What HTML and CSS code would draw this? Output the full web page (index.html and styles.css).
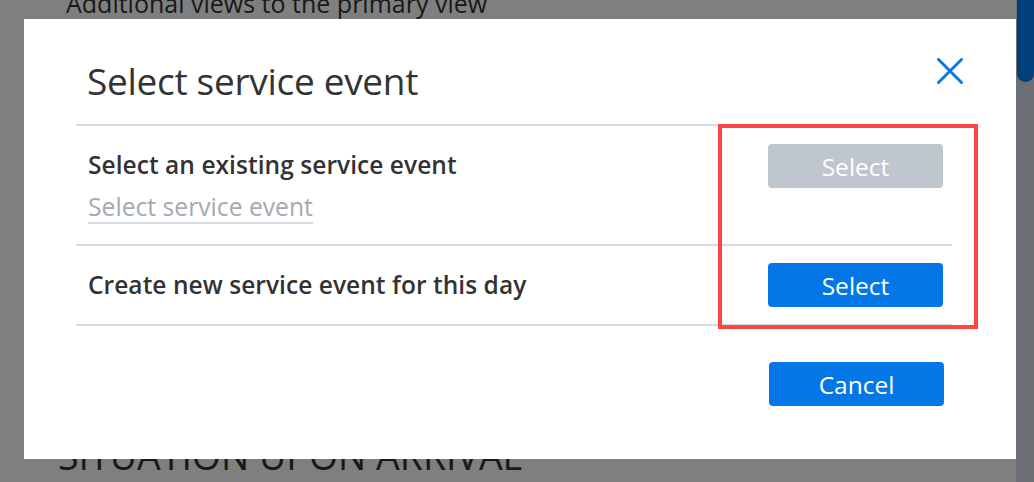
FILE: index.html
```html
<!DOCTYPE html>
<html lang="en">
<head>
<meta charset="utf-8">
<title>Select service event</title>
<link rel="stylesheet" href="styles.css">
</head>
<body>
<div class="page">
  <p class="page-sub">Additional views to the primary view</p>
  <h2 class="page-section">SITUATION UPON ARRIVAL</h2>
</div>
<div class="overlay"></div>
<div class="scrollbar"><div class="thumb"></div></div>
<div class="modal">
  <div class="modal-inner">
    <div class="modal-header">
      <h1 class="modal-title">Select service event</h1>
    </div>
    <div class="row row-existing">
      <div class="row-text">
        <div class="row-label">Select an existing service event</div>
        <div class="picker">Select service event</div>
      </div>
      <button class="btn btn-disabled">Select</button>
    </div>
    <div class="row row-new">
      <div class="row-text">
        <div class="row-label">Create new service event for this day</div>
      </div>
      <button class="btn btn-primary">Select</button>
    </div>
    <div class="modal-footer">
      <button class="btn btn-primary">Cancel</button>
    </div>
  </div>
  <button class="close" aria-label="Close">
    <svg width="26" height="26" viewBox="0 0 26 26"><path d="M1.5 1.5 L24.5 24.5 M24.5 1.5 L1.5 24.5" stroke="#0a77e8" stroke-width="3" stroke-linecap="round" fill="none"/></svg>
  </button>
  <div class="highlight"></div>
</div>
</body>
</html>
```
FILE: styles.css
```css
* { box-sizing: border-box; }
html, body { margin: 0; padding: 0; }
body {
  width: 1034px;
  height: 482px;
  overflow: hidden;
  background: #ffffff;
  font-family: "Open Sans", "Noto Sans", sans-serif;
  color: #333333;
}
.page {
  padding: 0 0 0 58px;
}
.page-sub {
  margin: -13px 0 0 8px;
  font-size: 25px;
  line-height: 32px;
  color: #333;
}
.page-section {
  margin: 417px 0 0 0;
  font-size: 37.5px;
  font-weight: 400;
  line-height: 40px;
  color: #333;
}
.overlay {
  position: fixed;
  inset: 0;
  background: rgba(0, 0, 0, 0.5);
}
.scrollbar {
  position: fixed;
  top: 0;
  right: 0;
  width: 18px;
  height: 482px;
  background: #6c6f73;
}
.thumb {
  margin-left: 1px;
  width: 17px;
  height: 82px;
  background: #003e7c;
  border-radius: 0 0 9px 9px;
}
.modal {
  position: fixed;
  left: 24px;
  top: 19px;
  width: 992px;
  height: 440px;
  background: #ffffff;
  padding: 0 64px 0 52px;
}
.modal-inner {
  display: flex;
  flex-direction: column;
}
.modal-header {
  height: 107px;
  border-bottom: 2px solid #d7dbe0;
  padding: 36px 0 0 11px;
}
.modal-title {
  margin: 0;
  font-size: 37px;
  font-weight: 400;
  line-height: 52px;
  color: #333;
  letter-spacing: -0.3px;
}
.row {
  display: flex;
  justify-content: space-between;
  border-bottom: 2px solid #d7dbe0;
  padding: 0 9px 0 12px;
}
.row-existing {
  height: 120px;
  padding-top: 18px;
  align-items: flex-start;
}
.row-new {
  height: 80px;
  align-items: center;
}
.row-text {
  display: flex;
  flex-direction: column;
  align-items: flex-start;
}
.row-label {
  font-size: 24.5px;
  font-weight: 600;
  line-height: 30px;
  color: #333;
  letter-spacing: 0.05px;
}
.row-existing .row-label {
  margin-top: 6px;
}
.picker {
  margin-top: 13px;
  font-size: 24.7px;
  line-height: 28px;
  color: #a3aab2;
  border-bottom: 2px solid #d7dbe0;
  padding-bottom: 1px;
}
.btn {
  width: 175px;
  height: 44px;
  border: none;
  border-radius: 4px;
  font-family: inherit;
  font-size: 24.5px;
  color: #ffffff;
  padding: 0;
}
.btn-disabled {
  background: #bfc6ce;
}
.btn-primary {
  background: #0477e8;
}
.modal-footer {
  display: flex;
  justify-content: flex-end;
  padding: 36px 8px 0 0;
}
.close {
  position: absolute;
  left: 913px;
  top: 39px;
  width: 26px;
  height: 26px;
  padding: 0;
  border: none;
  background: none;
}
.close svg { display: block; }
.highlight {
  position: absolute;
  left: 694px;
  top: 105px;
  width: 260px;
  height: 205px;
  border: 4px solid #ff4545;
}
```
